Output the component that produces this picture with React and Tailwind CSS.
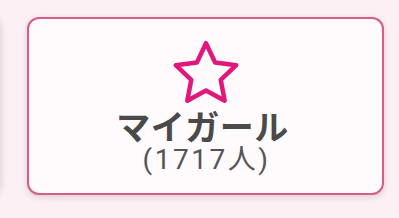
export default function App() {
  const pts = [
    [0, -31.8], [9.11, -12.54], [30.24, -9.83], [14.74, 4.79], [18.69, 25.73],
    [0, 15.5], [-18.69, 25.73], [-14.74, 4.79], [-30.24, -9.83], [-9.11, -12.54],
  ].map(([x, y]) => `${(36 + x).toFixed(2)},${(35 + y).toFixed(2)}`).join(" ");
  return (
    <div className="w-[399px] h-[218px] bg-[#fcf0f5] overflow-hidden flex gap-[27px] pt-[17px]" style={{ fontFamily: 'Roboto, "Noto Sans CJK JP", sans-serif' }}>
      <div className="shrink-0 w-[357px] h-[178px] -ml-[357px] rounded-[12px] bg-[#fffbfd] shadow-[0_1px_8px_rgba(0,0,0,0.18)]" />
      <div className="shrink-0 w-[357px] h-[178px] rounded-[12px] border-[2.5px] border-[#d95c85] bg-[#fffbfd] shadow-[0_2px_6px_rgba(0,0,0,0.14)] flex flex-col items-center pt-[21px]">
        <svg width="72" height="66" viewBox="0 0 72 66" className="shrink-0">
          <polygon points={pts} fill="none" stroke="#e0187c" strokeWidth="4.5" strokeLinejoin="round" />
        </svg>
        <div className="mt-[3px] mr-[6px] text-[34px] leading-[34px] tracking-[0.5px] font-bold text-[#4a4a4a]" style={{ fontFamily: '"Noto Sans CJK JP", sans-serif' }}>マイガール</div>
        <div className="mt-[2px] ml-[2px] text-[28px] leading-[30px] tracking-[2.5px] text-[#555555]">(1717人)</div>
      </div>
    </div>
  );
}
